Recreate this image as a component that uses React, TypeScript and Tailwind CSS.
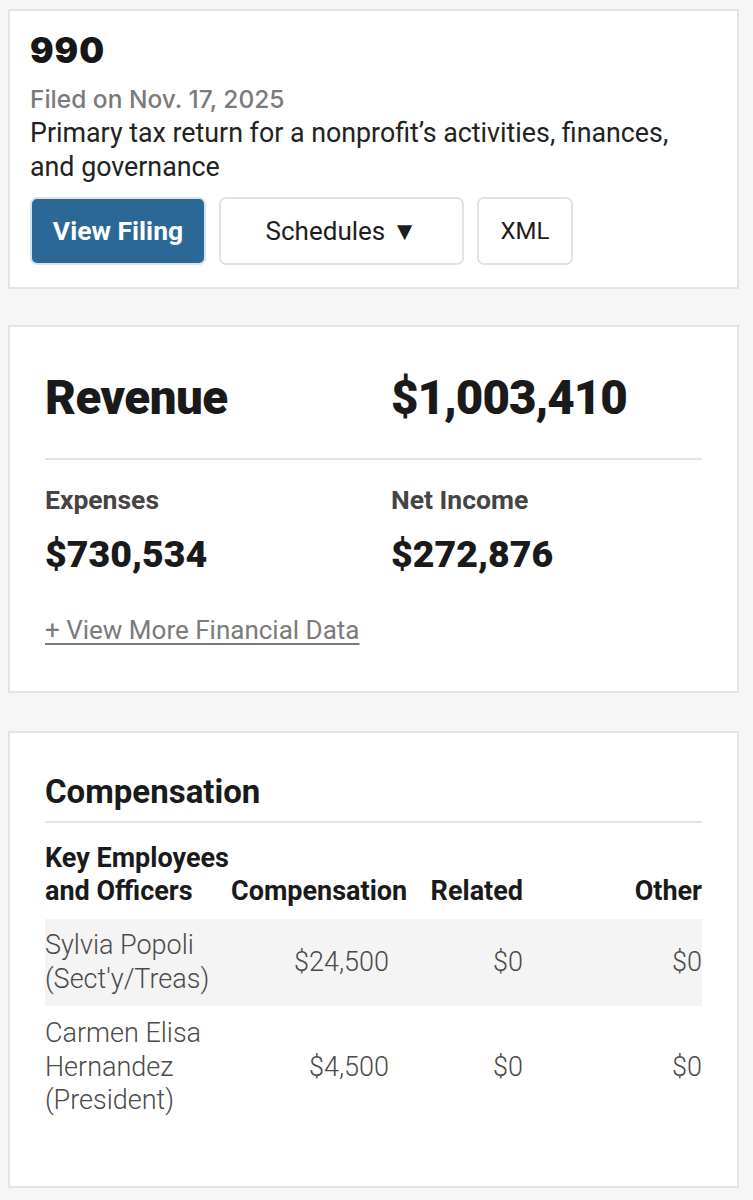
import type { ReactNode } from "react";

const body = { fontFamily: "Roboto, 'Liberation Sans', sans-serif" };
const graphik = { fontFamily: "Inter, 'Liberation Sans', sans-serif" };

interface Officer {
  name: string[];
  compensation: string;
  related: string;
  other: string;
}

const officers: Officer[] = [
  {
    name: ["Sylvia Popoli", "(Sect'y/Treas)"],
    compensation: "$24,500",
    related: "$0",
    other: "$0",
  },
  {
    name: ["Carmen Elisa", "Hernandez", "(President)"],
    compensation: "$4,500",
    related: "$0",
    other: "$0",
  },
];

function Card({ className, children }: { className: string; children: ReactNode }) {
  return (
    <section className={`ml-2 w-[731px] border-2 border-[#e4e4e4] bg-white ${className}`}>
      {children}
    </section>
  );
}

function FilingCard() {
  return (
    <Card className="px-[20px] pt-[19px] pb-[22px]">
      <h2 className="text-[35px] leading-[40px] font-black tracking-[1px] text-[#171717]" style={graphik}>
        990
      </h2>
      <p className="mt-[12px] text-[24.5px] leading-[34px] font-medium text-[#7a7a7a]" style={graphik}>
        Filed on Nov. 17, 2025
      </p>
      <p className="text-[26.8px] leading-[34px] text-[#222]" style={body}>
        Primary tax return for a nonprofit’s activities, finances,
        <br />
        and governance
      </p>
      <div className="mt-[13px] flex gap-[13px]">
        <button
          className="h-[68px] w-[176px] rounded-[7px] border-2 border-[#d6e4ef] bg-[#2c6896] text-[26.5px] font-bold text-white"
          style={body}
        >
          View Filing
        </button>
        <button
          className="h-[68px] w-[245px] rounded-[7px] border-2 border-[#e2e2e2] bg-white text-[26px] text-[#1d1d1d]"
          style={body}
        >
          Schedules ▼
        </button>
        <button
          className="h-[68px] w-[96px] rounded-[7px] border-2 border-[#e2e2e2] bg-white text-[24px] text-[#1d1d1d]"
          style={body}
        >
          XML
        </button>
      </div>
    </Card>
  );
}

function Stat({ label, value }: { label: string; value: string }) {
  return (
    <div>
      <div className="text-[26.5px] leading-[30px] font-bold text-[#444]">{label}</div>
      <div className="mt-[19px] text-[37.5px] leading-[40px] font-black text-[#1a1a1a]">{value}</div>
    </div>
  );
}

function FinancialsCard() {
  return (
    <Card className="mt-[36px] px-[35px] pt-[45px] pb-[45px]">
      <div style={body}>
        <div className="grid grid-cols-[346px_1fr] text-[47.5px] leading-[52px] font-black tracking-[-0.5px] text-[#1a1a1a]">
          <span>Revenue</span>
          <span className="tracking-[-1px]">$1,003,410</span>
        </div>
        <div className="mt-[34px] h-[2px] bg-[#e4e4e4]" />
        <div className="mt-[25px] grid grid-cols-[346px_1fr]">
          <Stat label="Expenses" value="$730,534" />
          <Stat label="Net Income" value="$272,876" />
        </div>
        <a
          href="#"
          className="mt-[41px] inline-block text-[26px] leading-[30px] text-[#7b7b7b] underline underline-offset-[4px]"
        >
          + View More Financial Data
        </a>
      </div>
    </Card>
  );
}

function CompensationCard() {
  return (
    <Card className="mt-[38px] px-[35px] pt-[41px] pb-[68px]">
      <div style={body}>
        <h3 className="text-[33px] leading-[36px] font-bold text-[#1a1a1a]">Compensation</h3>
        <div className="mt-[11px] h-[2px] bg-[#e4e4e4]" />
        <div className="mt-[19px] grid grid-cols-[186px_178px_114px_1fr] items-end text-[27px] leading-[33px] font-bold text-[#1a1a1a]">
          <span className="whitespace-nowrap">
            Key Employees
            <br />
            and Officers
          </span>
          <span className="whitespace-nowrap">Compensation</span>
          <span className="text-right">Related</span>
          <span className="text-right">Other</span>
        </div>
        <div className="mt-[11px]">
          {officers.map((o, i) => (
            <div
              key={o.name.join(" ")}
              className={`grid grid-cols-[186px_178px_114px_1fr] items-center text-[27px] font-light text-[#4a4a4a] ${
                i % 2 === 0 ? "bg-[#f4f4f4] pt-[9px] pb-[10px] leading-[34px]" : "pt-[11px] leading-[33.5px]"
              }`}
            >
              <div className="whitespace-nowrap">
                {o.name.map((line) => (
                  <div key={line}>{line}</div>
                ))}
              </div>
              <div className="pr-[20px] text-right">{o.compensation}</div>
              <div className="text-right">{o.related}</div>
              <div className="text-right">{o.other}</div>
            </div>
          ))}
        </div>
      </div>
    </Card>
  );
}

export default function App() {
  return (
    <div className="min-h-[1200px] bg-[#f6f6f6] pt-[9px]">
      <FilingCard />
      <FinancialsCard />
      <CompensationCard />
    </div>
  );
}
